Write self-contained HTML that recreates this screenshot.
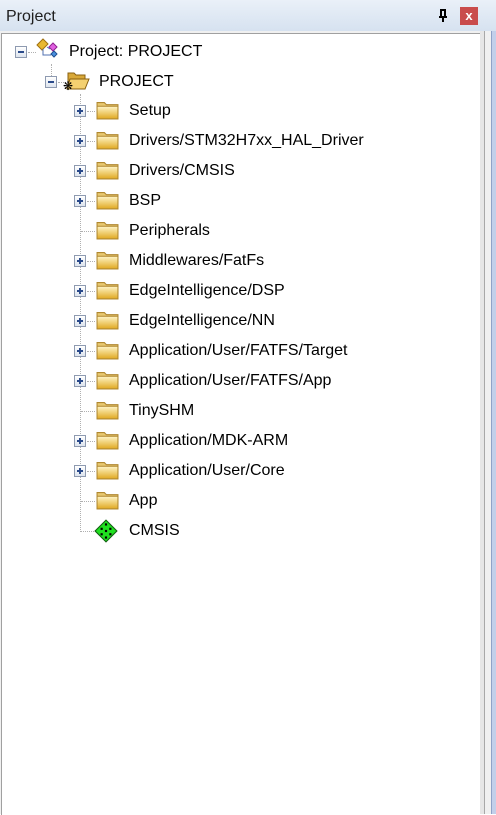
<!DOCTYPE html>
<html><head><style>
body{margin:0;width:496px;height:814px;overflow:hidden;background:#fff;font-family:"Segoe UI","Liberation Sans",sans-serif;position:relative}
.title{position:absolute;left:0;top:0;width:496px;height:31px;background:linear-gradient(#eaf0f8,#d6e2f0);}
.title span{position:absolute;left:6px;top:8px;font-size:16px;color:#1e1e1e}
.close{position:absolute;left:460px;top:7px;width:18px;height:18px;background:#c94c4c;color:#fff;font-size:13px;font-weight:bold;text-align:center;line-height:17px}
.pin{position:absolute;left:436px;top:9px}
.frame{position:absolute;left:0;top:31px;width:480px;height:783px;background:#f0f0f0}
.inner{position:absolute;left:1px;top:33px;width:479px;height:781px;background:#fff;border-top:1px solid #a0a0a0;border-left:1px solid #a0a0a0}
.r1{position:absolute;left:480px;top:31px;width:4px;height:783px;background:#e6e6e6}
.r2{position:absolute;left:484px;top:31px;width:1px;height:783px;background:#a8a8a8}
.r3{position:absolute;left:485px;top:31px;width:6px;height:783px;background:#f0f0f0}
.r4{position:absolute;left:491px;top:31px;width:5px;height:783px;background:#c2cfea;border-left:1px solid #8fa2c8}
.t{position:absolute;font-size:16px;color:#000;line-height:20px}
.exp{position:absolute;width:10px;height:10px;border:1px solid #8e9ab0;background:linear-gradient(#fff,#dde4ee)}
.exp:before{content:"";position:absolute;left:2px;top:4px;width:6px;height:2px;background:#2a4a8a}
.exp.p:after{content:"";position:absolute;left:4px;top:2px;width:2px;height:6px;background:#2a4a8a}
.vl{position:absolute;width:0;border-left:1px dotted #b0b0b0}
.hl{position:absolute;height:0;border-top:1px dotted #b0b0b0}
.fold{position:absolute;width:23px;height:19px}
</style></head><body>
<div class="title"><span>Project</span>
<svg class="pin" width="14" height="14" viewBox="0 0 14 14"><path d="M4 1h6M5 1v7M9 1v7M3 8h8M7 8v5" stroke="#000" stroke-width="2" fill="none"/></svg>
<div class="close">x</div></div>
<div class="frame"></div><div class="inner"></div>
<div class="r1"></div><div class="r2"></div><div class="r3"></div><div class="r4"></div>

<div class="vl" style="left:51px;top:64px;height:18px"></div>
<div class="vl" style="left:80px;top:94px;height:438px"></div>
<div class="hl" style="left:28px;top:52px;width:8px"></div>
<div class="hl" style="left:58px;top:82px;width:8px"></div>

<div class="exp" style="left:15px;top:46px"></div>
<svg style="position:absolute;left:35px;top:37px" width="26" height="24" viewBox="0 0 26 24">
<path d="M2 8l6-6 5 5-6 6z" fill="#e8b830" stroke="#a07010"/>
<path d="M14 10l4-4 4 4-4 4z" fill="#e060e0" stroke="#902090"/>
<path d="M16 17l3-3 3 3-3 3z" fill="#4a90e0" stroke="#205090"/>
<path d="M8 12v6h8M12 10l3 2" stroke="#5070b0" fill="none"/></svg>
<div class="t" style="left:69px;top:42px">Project: PROJECT</div>

<div class="exp" style="left:45px;top:76px"></div>
<svg style="position:absolute;left:63px;top:70px" width="28" height="22" viewBox="0 0 28 22">
<path d="M5 3h6l2 2h9v14H5z" fill="#d8a838" stroke="#8a6010"/>
<path d="M7 9h19l-4 10H4z" fill="#f4d070" stroke="#8a6010"/>
<text x="0" y="20" font-size="12" fill="#000" font-family="DejaVu Sans">❋</text></svg>
<div class="t" style="left:99px;top:72px">PROJECT</div>

<div id="kids"></div>
<script>
var items=[["Setup",1],["Drivers/STM32H7xx_HAL_Driver",1],["Drivers/CMSIS",1],["BSP",1],["Peripherals",0],["Middlewares/FatFs",1],["EdgeIntelligence/DSP",1],["EdgeIntelligence/NN",1],["Application/User/FATFS/Target",1],["Application/User/FATFS/App",1],["TinySHM",0],["Application/MDK-ARM",1],["Application/User/Core",1],["App",0]];
var h="";
items.forEach(function(it,i){var c=111+30*i;
h+='<div class="hl" style="left:'+(it[1]?87:81)+'px;top:'+c+'px;width:'+(it[1]?8:14)+'px"></div>';
if(it[1])h+='<div class="exp p" style="left:74px;top:'+(c-6)+'px"></div>';
h+='<svg class="fold" style="left:96px;top:'+(c-10)+'px" viewBox="0 0 22 18" preserveAspectRatio="none"><defs><linearGradient id="g'+i+'" x1="0" y1="0" x2="0" y2="1"><stop offset="0" stop-color="#fff6c8"/><stop offset="1" stop-color="#e0a820"/></linearGradient></defs><path d="M1 1.5h7l2 2h11v13H1z" fill="#e8c870" stroke="#b08830"/><path d="M1 5h20v12H1z" fill="url(#g'+i+')" stroke="#b08830"/></svg>';
h+='<div class="t" style="left:129px;top:'+(c-10)+'px">'+it[0]+'</div>';});
document.getElementById("kids").innerHTML=h;
</script>
<div class="hl" style="left:81px;top:531px;width:13px"></div>
<svg style="position:absolute;left:94px;top:519px" width="24" height="24" viewBox="0 0 22 22">
<path d="M11 1l10 10-10 10L1 11z" fill="#20e020" stroke="#106010"/>
<g fill="#000"><rect x="10" y="4" width="2" height="2"/><rect x="6" y="8" width="2" height="2"/><rect x="14" y="8" width="2" height="2"/><rect x="10" y="10" width="2" height="2"/><rect x="6" y="13" width="2" height="2"/><rect x="14" y="13" width="2" height="2"/><rect x="10" y="16" width="2" height="2"/></g></svg>
<div class="t" style="left:129px;top:521px">CMSIS</div>
</body></html>
